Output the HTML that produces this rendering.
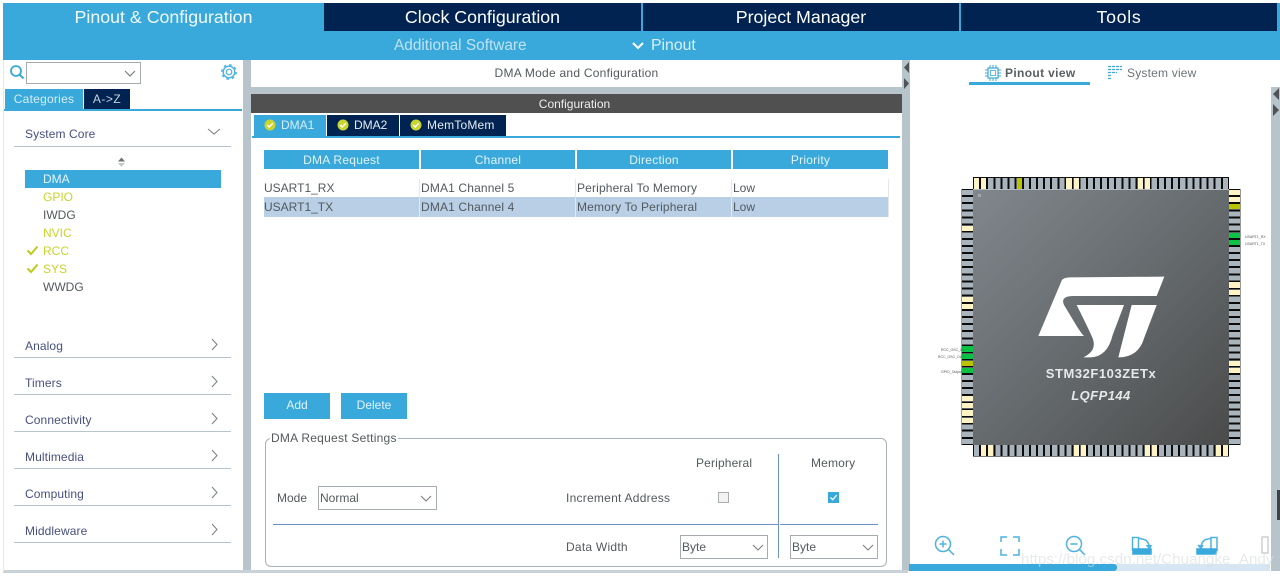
<!DOCTYPE html>
<html><head><meta charset="utf-8"><style>
html,body{margin:0;padding:0;background:#fff}
#p{position:relative;width:1280px;height:576px;overflow:hidden;background:#fff;font:12px "Liberation Sans",sans-serif;color:#53595d;filter:blur(.35px)}
#p div,#p span.a,#p svg{position:absolute}
.t{white-space:nowrap;line-height:16px}
.hd{top:3px;height:28px;background:#002352;color:#fff;font-size:17.8px;line-height:28px;text-align:center}
.th{top:150px;height:19px;background:#39a9dc;color:#e3f3fa;line-height:20px;text-align:center;letter-spacing:.25px}
.cat{left:25px;color:#46507f;letter-spacing:.1px}
.ln{left:14px;width:217px;height:1px;background:#b8c4cc}
.it{left:43px}
.y{color:#c8d42c}
.ctab{top:115px;height:21px;background:#002352;color:#e6edf4;line-height:21px}
.sel{background:#fff;border:1px solid #a5abaf;box-sizing:border-box;color:#53595d;padding-left:1px;line-height:20px}
.btn{top:393px;height:26px;background:#39a9dc;color:#e3f3fa;text-align:center;line-height:25px}
.ls{letter-spacing:.15px}
.lw{letter-spacing:.25px}
.pt{background:repeating-linear-gradient(90deg,#0b0b0b 0,#0b0b0b 1px,#a9b4bc 1px,#a9b4bc 6.11px,#0b0b0b 6.11px,#0b0b0b 7.11px);box-sizing:border-box}
.pl{background:repeating-linear-gradient(180deg,#0b0b0b 0,#0b0b0b 1px,#a9b4bc 1px,#a9b4bc 6.11px,#0b0b0b 6.11px,#0b0b0b 7.11px);box-sizing:border-box}
.pt i,.pl i{position:absolute;display:block}
.pt i{top:0;bottom:0;width:5.11px;left:calc(var(--i)*7.11px + 1px)}
.pl i{left:0;right:0;height:5.11px;top:calc(var(--i)*7.11px + 1px)}
.c1{background:#fdf3c4}.c2{background:#b9c300}.c3{background:#0cc244}
.lb{font-size:3.5px;color:#555;white-space:nowrap;line-height:4px}
</style></head><body><div id="p">

<!-- header -->
<div style="left:3px;top:3px;width:1277px;height:57px;background:#39a9dc"></div>
<div class="hd" style="left:3px;width:320px;background:#39a9dc;color:#f2fafd;padding-left:1px;box-sizing:border-box">Pinout &amp; Configuration</div>
<div class="hd" style="left:324px;width:317px">Clock Configuration</div>
<div class="hd" style="left:643px;width:316px">Project Manager</div>
<div class="hd" style="left:961px;width:316px;letter-spacing:.7px">Tools</div>
<div class="t" style="left:394px;top:37px;font-size:15.4px;line-height:18px;color:#bfe3f4">Additional Software</div>
<svg style="left:631px;top:41px" width="14" height="10"><path d="M2 2l5 5 5-5" fill="none" stroke="#fff" stroke-width="2"/></svg>
<div class="t" style="left:651px;top:37px;font-size:15.8px;line-height:18px;color:#d9eff9">Pinout</div>

<!-- separators -->
<div style="left:243px;top:60px;width:8px;height:516px;background:#b8c4cc"></div>
<div style="left:902px;top:60px;width:8px;height:516px;background:#b8c4cc"></div>
<div style="left:1271px;top:87px;width:9px;height:489px;background:#b8c4cc"></div>
<div style="left:0;top:571px;width:1280px;height:5px;background:#fff"></div>
<div style="left:3px;top:570px;width:905px;height:3px;background:#c8d2d8"></div>
<div style="left:0;top:60px;width:3px;height:516px;background:#fff"></div>
<div style="left:3px;top:60px;width:1px;height:512px;background:#e4e8ea"></div>

<!-- left panel -->
<svg style="left:8px;top:64px" width="18" height="18" fill="none" stroke="#39a9dc"><circle cx="8" cy="7" r="5" stroke-width="1.8"/><path d="M11.5 10.5l4 4" stroke-width="2"/></svg>
<div class="sel" style="left:26px;top:62px;width:115px;height:22px"></div>
<svg style="left:124px;top:69px" width="12" height="9"><path d="M1 2l5 5 5-5" fill="none" stroke="#7a7f83" stroke-width="1.2"/></svg>
<svg style="left:220px;top:63px" width="18" height="18" viewBox="0 0 18 18" fill="none" stroke="#4db2e2"><circle cx="9" cy="9" r="2.800" stroke-width="1.200"/><circle cx="9" cy="9" r="5.800" stroke-width="1.400"/><circle cx="9" cy="9" r="7.200" stroke-width="1.400" stroke-dasharray="2.600 3.050"/></svg>
<div style="left:5px;top:89px;width:78px;height:20px;background:#39a9dc;color:#d6edf8;text-align:center;line-height:20px;letter-spacing:.25px">Categories</div>
<div style="left:84px;top:89px;width:46px;height:20px;background:#002352;color:#c8d2de;text-align:center;line-height:20px;letter-spacing:.5px">A-&gt;Z</div>
<div style="left:4px;top:109px;width:238px;height:2px;background:#39a9dc"></div>
<div style="left:4px;top:111px;width:238px;height:459px;background:#fff"></div>
<div class="t cat" style="top:126px">System Core</div>
<svg style="left:207px;top:127px" width="14" height="10"><path d="M1 2l6 5 6-5" fill="none" stroke="#7f8488" stroke-width="1.1"/></svg>
<div class="ln" style="top:146px"></div>
<svg style="left:117px;top:157px" width="9" height="11"><path d="M4.500 0.500L8 4.500H1Z" fill="#6b7074"/><path d="M4.500 10L8 6H1Z" fill="#c4c8ca"/></svg>
<div style="left:25px;top:170px;width:196px;height:18px;background:#39a9dc"></div>
<div class="t it" style="top:171px;color:#e6f4fa">DMA</div>
<div class="t it y" style="top:189px">GPIO</div>
<div class="t it" style="top:207px">IWDG</div>
<div class="t it y" style="top:225px">NVIC</div>
<div class="t it y" style="top:243px">RCC</div>
<div class="t it y" style="top:261px">SYS</div>
<div class="t it" style="top:279px">WWDG</div>
<svg style="left:26px;top:245px" width="13" height="11"><path d="M1.500 5.500l3.500 3.500 6.500-7.500" fill="none" stroke="#bccb1a" stroke-width="2"/></svg>
<svg style="left:26px;top:263px" width="13" height="11"><path d="M1.500 5.500l3.500 3.500 6.500-7.500" fill="none" stroke="#bccb1a" stroke-width="2"/></svg>

<div class="t cat" style="top:338px">Analog</div><div class="ln" style="top:357px"></div>
<div class="t cat" style="top:375px">Timers</div><div class="ln" style="top:394px"></div>
<div class="t cat" style="top:412px">Connectivity</div><div class="ln" style="top:431px"></div>
<div class="t cat" style="top:449px">Multimedia</div><div class="ln" style="top:468px"></div>
<div class="t cat" style="top:486px">Computing</div><div class="ln" style="top:505px"></div>
<div class="t cat" style="top:523px">Middleware</div><div class="ln" style="top:542px"></div>
<svg style="left:210px;top:338px" width="9" height="14"><path d="M2 1l5 5.500-5 5.500" fill="none" stroke="#7f8488" stroke-width="1.1"/></svg>
<svg style="left:210px;top:375px" width="9" height="14"><path d="M2 1l5 5.500-5 5.500" fill="none" stroke="#7f8488" stroke-width="1.1"/></svg>
<svg style="left:210px;top:412px" width="9" height="14"><path d="M2 1l5 5.500-5 5.500" fill="none" stroke="#7f8488" stroke-width="1.1"/></svg>
<svg style="left:210px;top:449px" width="9" height="14"><path d="M2 1l5 5.500-5 5.500" fill="none" stroke="#7f8488" stroke-width="1.1"/></svg>
<svg style="left:210px;top:486px" width="9" height="14"><path d="M2 1l5 5.500-5 5.500" fill="none" stroke="#7f8488" stroke-width="1.1"/></svg>
<svg style="left:210px;top:523px" width="9" height="14"><path d="M2 1l5 5.500-5 5.500" fill="none" stroke="#7f8488" stroke-width="1.1"/></svg>

<!-- center -->
<div style="left:251px;top:87px;width:651px;height:7px;background:#b8c4cc"></div>
<div class="t lw" style="left:251px;width:651px;top:65px;text-align:center">DMA Mode and Configuration</div>
<div style="left:251px;top:94px;width:647px;height:19px;background:#4f504f;color:#eee;text-align:center;line-height:20px;padding-right:4px">Configuration</div>
<div class="ctab" style="left:254px;width:72px;background:#39a9dc;color:#d6edf8;padding-left:27px;box-sizing:border-box">DMA1</div>
<div class="ctab" style="left:327px;width:72px;padding-left:27px;box-sizing:border-box">DMA2</div>
<div class="ctab" style="left:400px;width:106px;padding-left:27px;box-sizing:border-box;letter-spacing:.2px">MemToMem</div>
<svg style="left:264px;top:119px" width="12" height="12"><circle cx="6" cy="6" r="5.500" fill="#c9d630"/><path d="M3.200 6l2 2 3.500-3.600" fill="none" stroke="#fff" stroke-width="1.400"/></svg>
<svg style="left:337px;top:119px" width="12" height="12"><circle cx="6" cy="6" r="5.500" fill="#c9d630"/><path d="M3.200 6l2 2 3.500-3.600" fill="none" stroke="#fff" stroke-width="1.400"/></svg>
<svg style="left:410px;top:119px" width="12" height="12"><circle cx="6" cy="6" r="5.500" fill="#c9d630"/><path d="M3.200 6l2 2 3.500-3.600" fill="none" stroke="#fff" stroke-width="1.400"/></svg>
<div style="left:252px;top:136px;width:648px;height:2px;background:#39a9dc"></div>

<div class="th" style="left:264px;width:155px">DMA Request</div>
<div class="th" style="left:421px;width:154px">Channel</div>
<div class="th" style="left:577px;width:154px">Direction</div>
<div class="th" style="left:733px;width:155px">Priority</div>
<div style="left:264px;top:197px;width:624px;height:20px;background:#b8cfe6"></div>
<div style="left:419px;top:179px;width:1px;height:38px;background:#e4e8ec"></div>
<div style="left:575px;top:179px;width:1px;height:38px;background:#e4e8ec"></div>
<div style="left:731px;top:179px;width:1px;height:38px;background:#e4e8ec"></div>
<div style="left:888px;top:179px;width:1px;height:38px;background:#e4e8ec"></div>
<div class="t" style="left:264px;top:180px">USART1_RX</div>
<div class="t ls" style="left:421px;top:180px">DMA1 Channel 5</div>
<div class="t ls" style="left:577px;top:180px">Peripheral To Memory</div>
<div class="t" style="left:733px;top:180px">Low</div>
<div class="t" style="left:264px;top:199px">USART1_TX</div>
<div class="t ls" style="left:421px;top:199px">DMA1 Channel 4</div>
<div class="t ls" style="left:577px;top:199px">Memory To Peripheral</div>
<div class="t" style="left:733px;top:199px">Low</div>

<div class="btn" style="left:264px;width:66px">Add</div>
<div class="btn" style="left:341px;width:66px">Delete</div>

<div style="left:265px;top:438px;width:622px;height:129px;box-sizing:border-box;border:1px solid #a8b0b5;border-radius:6px"></div>
<div class="t lw" style="left:270px;top:430px;background:#fff;padding:0 1px">DMA Request Settings</div>
<div class="t" style="left:277px;top:490px">Mode</div>
<div class="sel" style="left:318px;top:486px;width:119px;height:24px;line-height:22px">Normal</div>
<svg style="left:420px;top:494px" width="12" height="9"><path d="M1 2l5 5 5-5" fill="none" stroke="#7a7f83" stroke-width="1.1"/></svg>
<div style="left:273px;top:524px;width:505px;height:1px;background:#6f8fc8"></div>
<div style="left:780px;top:524px;width:98px;height:1px;background:#6f8fc8"></div>
<div style="left:778px;top:454px;width:1px;height:104px;background:#6f8fc8"></div>
<div class="t ls" style="left:696px;top:455px">Peripheral</div>
<div class="t ls" style="left:811px;top:455px">Memory</div>
<div class="t lw" style="left:566px;top:490px">Increment Address</div>
<div style="left:718px;top:492px;width:11px;height:11px;box-sizing:border-box;border:1px solid #a8adb0;background:#f2f2f2"></div>
<svg style="left:828px;top:492px" width="11" height="11"><rect width="11" height="11" fill="#39a9dc"/><path d="M2.500 5.500l2.200 2.200 4-4.500" fill="none" stroke="#fff" stroke-width="1.300"/></svg>
<div class="t lw" style="left:566px;top:539px">Data Width</div>
<div class="sel" style="left:680px;top:535px;width:88px;height:24px;line-height:22px">Byte</div>
<svg style="left:752px;top:543px" width="12" height="9"><path d="M1 2l5 5 5-5" fill="none" stroke="#7a7f83" stroke-width="1.1"/></svg>
<div class="sel" style="left:790px;top:535px;width:88px;height:24px;line-height:22px">Byte</div>
<svg style="left:862px;top:543px" width="12" height="9"><path d="M1 2l5 5 5-5" fill="none" stroke="#7a7f83" stroke-width="1.1"/></svg>

<!-- splitter arrows -->
<svg style="left:902px;top:61px" width="8" height="29"><path d="M7 1v11L2 6.500Z M2 17v11l5-5.500Z" fill="#4f5356"/></svg>
<svg style="left:1271px;top:88px" width="9" height="29"><path d="M8 0v12L2 6Z M2 16v12l6-6Z" fill="#4f5356"/></svg>
<div style="left:1277px;top:490px;width:3px;height:30px;background:#3c4246"></div>

<!-- right tabs -->
<svg style="left:985px;top:65px" width="16" height="16" fill="none" stroke="#39a9dc"><rect x="3" y="3" width="10" height="10" stroke-width="1.200"/><rect x="5.500" y="5.500" width="5" height="5" stroke-width=".8"/><path d="M5 0v16M8 0v16M11 0v16M0 5h16M0 8h16M0 11h16" stroke-dasharray="2.500 11" stroke-width="1"/></svg>
<div class="t" style="left:1005px;top:65px;font-weight:bold;color:#5a5f63;letter-spacing:.35px">Pinout view</div>
<div style="left:969px;top:82px;width:121px;height:3px;background:#39a9dc"></div>
<svg style="left:1108px;top:65px" width="14" height="15" fill="none" stroke="#39a9dc" stroke-width="1.300"><path d="M0 1.500h14M0 4.500h14M0 7.500h9M0 10.500h4M0 13.500h4" stroke-dasharray="3 1"/></svg>
<div class="t" style="left:1127px;top:65px;letter-spacing:.2px;color:#6d7377">System view</div>

<!-- chip -->
<div class="pt" style="left:973px;top:177px;width:256px;height:12px;border-top:1px solid #111"><i class="c1" style="--i:0"></i><i class="c1" style="--i:1"></i><i class="c2" style="--i:6"></i><i class="c1" style="--i:13"></i><i class="c1" style="--i:14"></i><i class="c1" style="--i:23"></i><i class="c1" style="--i:24"></i></div>
<div class="pt" style="left:973px;top:445px;width:256px;height:12px;border-bottom:1px solid #777"><i class="c1" style="--i:1"></i><i class="c1" style="--i:2"></i><i class="c1" style="--i:14"></i><i class="c1" style="--i:15"></i><i class="c1" style="--i:24"></i><i class="c1" style="--i:25"></i><i class="c1" style="--i:34"></i><i class="c1" style="--i:35"></i></div>
<div class="pl" style="left:961px;top:189px;width:12px;height:256px;border-left:1px solid #999"><i class="c1" style="--i:5"></i><i class="c1" style="--i:15"></i><i class="c1" style="--i:16"></i><i class="c3" style="--i:22"></i><i class="c3" style="--i:23"></i><i class="c2" style="--i:24"></i><i class="c3" style="--i:25"></i><i class="c1" style="--i:29"></i><i class="c1" style="--i:30"></i><i class="c1" style="--i:31"></i><i class="c1" style="--i:32"></i></div>
<div class="pl" style="left:1229px;top:189px;width:12px;height:256px;border-right:1px solid #999"><i class="c1" style="--i:0"></i><i class="c1" style="--i:1"></i><i class="c2" style="--i:2"></i><i class="c3" style="--i:6"></i><i class="c3" style="--i:7"></i><i class="c1" style="--i:13"></i><i class="c1" style="--i:14"></i><i class="c1" style="--i:24"></i><i class="c1" style="--i:25"></i></div>
<div style="left:973px;top:189px;width:256px;height:256px;background:linear-gradient(135deg,#80878c 0%,#666b6e 50%,#4a4b4b 100%);border-top:1px solid #b5bcc0;box-sizing:border-box"></div>
<div style="left:978px;top:194px;width:3px;height:3px;background:#a2a9ad"></div>
<svg style="left:1020px;top:260px" width="160" height="150" viewBox="0 0 480 450" fill="#fff">
<path d="M125 62Q130 52 150 52L433 50L410 108L160 108Q120 108 132 135L170 198Q185 222 192 228L55 228Z"/>
<path d="M170 135L312 135L278 225Q262 292 210 292L190 292Q232 272 218 235Q205 205 170 135Z"/>
<path d="M335 135L410 135L372 235Q355 292 295 292Z"/>
</svg>
<div class="t" style="left:973px;width:256px;top:366px;text-align:center;font-weight:bold;font-size:13px;color:#e6e8e9;letter-spacing:.55px">STM32F103ZETx</div>
<div class="t" style="left:973px;width:256px;top:388px;text-align:center;font-weight:bold;font-style:italic;font-size:13px;color:#e6e8e9;letter-spacing:.45px">LQFP144</div>

<div class="lb" style="left:941px;top:348px">RCC_OSC_IN</div>
<div class="lb" style="left:938px;top:355px">RCC_OSC_OUT</div>
<div class="lb" style="left:941px;top:370px">GPIO_Output</div>
<div class="lb" style="left:1245px;top:235px">USART1_RX</div>
<div class="lb" style="left:1245px;top:242px">USART1_TX</div>

<!-- bottom tools -->
<svg style="left:930px;top:530px" width="340" height="30" fill="none" stroke="#4db2e2" stroke-width="1.500">
<circle cx="13" cy="14" r="7.500"/><path d="M18.500 19.500l5.500 5.500M13 10.500v7M9.500 14h7"/>
<path d="M71 12V7h6M83 7h6v5M89 19v6h-6M77 25h-6v-6"/>
<circle cx="144" cy="14" r="7.500"/><path d="M149.500 19.500l5.500 5.500M140.500 14h7"/>
<path d="M202.500 21V7.500h6V21M208.500 8.500h3"/><path d="M211 9q7 0 8.500 8" /><path d="M216.500 15l3 3.500 2-3.500" fill="#4db2e2"/>
<rect x="203" y="19" width="18" height="5" fill="#39a9dc" stroke="#39a9dc"/>
<path d="M287 21V7.500h-6V21M281 8.500h-2"/><path d="M279 9q-7 0-8 8"/><path d="M268 15l3 3.500 2-3.500" fill="#4db2e2"/>
<rect x="267" y="19" width="19" height="5" fill="#39a9dc" stroke="#39a9dc"/>
<rect x="332" y="7" width="6" height="16" stroke="#ccd0d3"/>
</svg>
<div style="left:909px;top:564px;width:361px;height:7px;background:#d6e6f3"></div>
<div style="left:909px;top:564px;width:208px;height:7px;background:#39a9dc;border-radius:0 3px 3px 0"></div>
<div class="t" style="left:1021px;top:551px;font-size:15.2px;line-height:17px;color:rgba(215,220,224,.6)">https://blog.csdn.net/Chuangke_Andy</div>
</div></body></html>
